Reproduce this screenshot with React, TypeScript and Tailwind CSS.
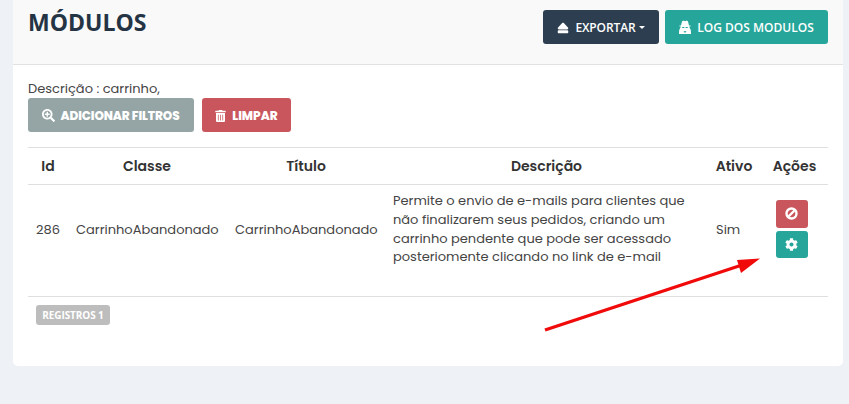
import { FaEject, FaSearchPlus, FaTrashAlt, FaCog } from "react-icons/fa";

const body = "font-['Poppins','Inter',sans-serif]";

export default function App() {
  return (
    <div className="relative w-[849px] h-[404px] overflow-hidden bg-[#eef1f6]">
      <div className="ml-[13px] w-[830px] h-[366px] bg-white rounded-b-[5px] flex flex-col">
        <div className="h-[65px] shrink-0 bg-[#f9f9f9] border-b border-[#e2e2e2] flex justify-between pl-[15px] pr-[15px] font-['Open_Sans',sans-serif]">
          <h1 className="text-[23px] leading-[32px] mt-[6px] font-bold text-[#253445]">MÓDULOS</h1>
          <div className="flex gap-[6px] mt-[10px] h-[34px]">
            <button className="w-[116px] rounded-[3px] bg-[#2c3e50] text-white text-[12px] font-semibold tracking-[-0.1px] flex items-center justify-center pr-[1px] pt-[1px]">
              <FaEject className="w-[14px] h-[12px] mr-[5px]" />
              EXPORTAR
              <span className="ml-[3px] border-x-[3px] border-x-transparent border-t-[3px] border-t-white" />
            </button>
            <button className="w-[163px] rounded-[3px] bg-[#26a69a] text-white text-[12px] font-semibold flex items-center justify-center pt-[1px]">
              <svg className="mr-[6px]" width="12" height="15" viewBox="0 0 12 15" fill="currentColor">
                <path d="M3 1.5 C3.5 0.5 4.5 0.8 6 1.2 C7.5 0.8 8.5 0.5 9 1.5 L10 5.5 H11.5 V6.5 H10.2 C10.5 7.5 10.8 8 11 8.5 C11.8 9.3 12 11 12 14 H0 C0 11 0.2 9.3 1 8.5 C1.2 8 1.5 7.5 1.8 6.5 H0.5 V5.5 H2 Z" />
                <path d="M3.2 7.5 H5.4 M6.6 7.5 H8.8 M5 11 L6 12.5 L7 11" fill="none" stroke="#26a69a" strokeWidth="1" />
              </svg>
              LOG DOS MODULOS
            </button>
          </div>
        </div>
        <div className={`px-[15px] pt-[15px] text-[#444444] ${body}`}>
          <p className="text-[13px] leading-[18px]">Descrição : carrinho,</p>
          <div className="flex gap-[8px] h-[34px]">
            <button className="w-[166px] rounded-[3px] bg-[#95a5a6] text-white text-[12px] font-extrabold flex items-center justify-center tracking-[-0.1px] pt-[1px]">
              <FaSearchPlus className="w-[13px] h-[13px] mr-[6px] -ml-[1px]" />
              ADICIONAR FILTROS
            </button>
            <button className="w-[89px] rounded-[3px] bg-[#c9565c] text-white text-[12px] font-extrabold flex items-center justify-center pt-[1px]">
              <FaTrashAlt className="w-[11px] h-[12px] mr-[6px]" />
              LIMPAR
            </button>
          </div>
          <table className="mt-[15px] w-[800px] table-fixed border-collapse">
            <colgroup>
              <col className="w-[40px]" />
              <col className="w-[159px]" />
              <col className="w-[159px]" />
              <col className="w-[322px]" />
              <col className="w-[53px]" />
              <col className="w-[67px]" />
            </colgroup>
            <thead>
              <tr className="h-[37px] border-y border-[#dfdfdf] text-[14px] text-[#333333] text-center">
                <th className="font-semibold">Id</th>
                <th className="font-semibold pr-[1px]">Classe</th>
                <th className="font-semibold pr-[1px]">Título</th>
                <th className="font-semibold pr-[1px]">Descrição</th>
                <th className="font-semibold pr-[1px]">Ativo</th>
                <th className="font-semibold">Ações</th>
              </tr>
            </thead>
            <tbody>
              <tr className="h-[112px] border-b border-[#dfdfdf] text-[13px] text-[#444444]">
                <td className="pl-[8px] pb-[22px]">286</td>
                <td className="pl-[8px] pb-[22px] whitespace-nowrap">CarrinhoAbandonado</td>
                <td className="pl-[8px] pb-[22px] whitespace-nowrap">CarrinhoAbandonado</td>
                <td className="pl-[7px] pb-[22px] leading-[18.6px]">
                  Permite o envio de e-mails para clientes que<br />
                  não finalizarem seus pedidos, criando um<br />
                  carrinho pendente que pode ser acessado<br />
                  posteriomente clicando no link de e-mail
                </td>
                <td className="pl-[8px] pb-[22px]">Sim</td>
                <td className="pb-[24px] pr-[6px]">
                  <div className="flex flex-col items-center gap-[3px]">
                    <span className="w-[32px] h-[28px] rounded-[3px] bg-[#c9565c] text-white flex items-center justify-center">
                      <svg width="13" height="13" viewBox="0 0 13 13" fill="none" stroke="currentColor" strokeWidth="2.4">
                        <circle cx="6.5" cy="6.5" r="5" />
                        <path d="M3 10 L10 3" />
                      </svg>
                    </span>
                    <span className="w-[32px] h-[27px] rounded-[3px] bg-[#26a69a] text-white flex items-center justify-center"><FaCog className="w-[13px] h-[13px]" /></span>
                  </div>
                </td>
              </tr>
            </tbody>
          </table>
          <div className="mt-[8px] ml-[8px] w-[74px] h-[20px] rounded-[3px] bg-[#bdbdbd] text-white text-[10px] font-bold font-['Open_Sans',sans-serif] tracking-[-0.1px] flex items-center justify-center">REGISTROS 1</div>
        </div>
      </div>
      <svg className="absolute left-0 top-0 pointer-events-none" width="849" height="404" viewBox="0 0 849 404">
        <path d="M545 330 L742 265" stroke="#f00a0a" strokeWidth="3.4" fill="none" />
        <path d="M760 258.500 L737 260 L741 273 Z" fill="#f00a0a" />
      </svg>
    </div>
  );
}
